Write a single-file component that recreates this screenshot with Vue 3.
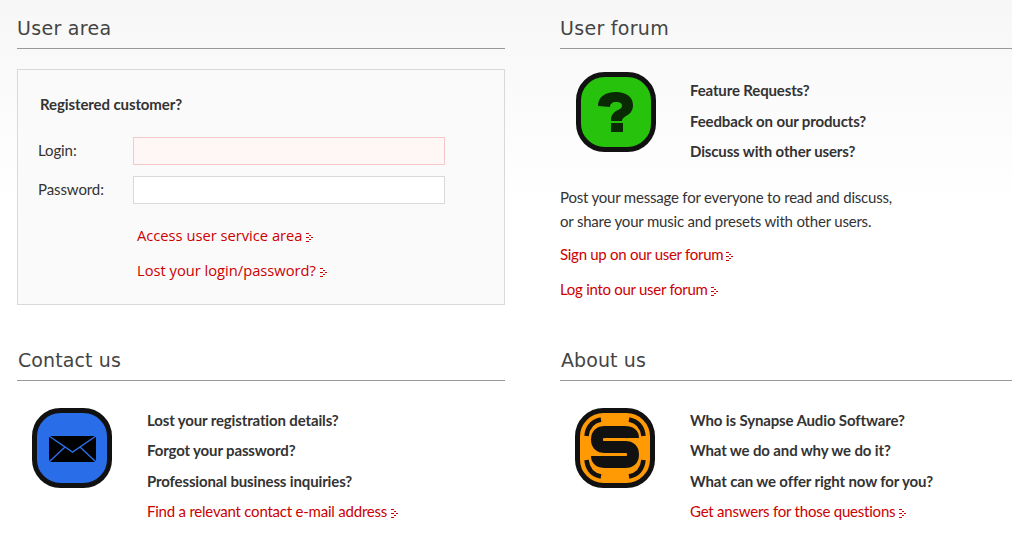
<template>
  <div class="page">
    <section class="panel">
      <h2 class="panel-title">User area</h2>
      <div class="login-box">
        <h3 class="login-title">Registered customer?</h3>
        <div class="field">
          <label class="field-label">Login:</label>
          <input class="field-input required" type="text" />
        </div>
        <div class="field">
          <label class="field-label">Password:</label>
          <input class="field-input" type="password" />
        </div>
        <div class="login-links">
          <a v-for="l in loginLinks" :key="l" class="link" href="#">{{ l }}<svg class="arrow" width="9" height="9" viewBox="0 0 9 9"><path :d="arrowPath" fill="#c00"/></svg></a>
        </div>
      </div>
    </section>

    <section class="panel">
      <h2 class="panel-title">User forum</h2>
      <div class="media forum-media">
        <svg class="media-icon" width="80" height="80" viewBox="0 0 80 80">
          <rect x="2.500" y="2.500" width="75" height="75" rx="26" fill="#27c20c" stroke="#111" stroke-width="5"/>
          <path d="M22 34c0-9 7-14 18-14 10 0 17 5 17 13 0 6-3 9-7 11-3 2-4 3-4 5H35c0-5 1-7 5-10 4-2 6-3 6-5 0-3-2-4-6-4-4 0-6 2-6 5z" fill="#0a2a04"/>
          <rect x="35" y="51" width="12" height="9" fill="#0a2a04"/>
        </svg>
        <ul class="questions">
          <li v-for="q in forumQuestions" :key="q">{{ q }}</li>
        </ul>
      </div>
      <p class="forum-text">Post your message for everyone to read and discuss,<br />or share your music and presets with other users.</p>
      <div class="forum-links">
        <a v-for="l in forumLinks" :key="l" class="link" href="#">{{ l }}<svg class="arrow" width="9" height="9" viewBox="0 0 9 9"><path :d="arrowPath" fill="#c00"/></svg></a>
      </div>
    </section>

    <section class="panel panel-low">
      <h2 class="panel-title">Contact us</h2>
      <div class="media contact-media">
        <svg class="media-icon" width="80" height="80" viewBox="0 0 80 80">
          <rect x="2.500" y="2.500" width="75" height="75" rx="26" fill="#2a6de8" stroke="#111" stroke-width="5"/>
          <rect x="17" y="28" width="47" height="26"/>
          <path d="M17 28l23.500 16L64 28M17 54l16-15M64 54L48 39" fill="none" stroke="#2a6de8" stroke-width="1.500"/>
        </svg>
        <div>
          <ul class="questions">
            <li v-for="q in contactQuestions" :key="q">{{ q }}</li>
          </ul>
          <a class="link" href="#">Find a relevant contact e-mail address<svg class="arrow" width="9" height="9" viewBox="0 0 9 9"><path :d="arrowPath" fill="#c00"/></svg></a>
        </div>
      </div>
    </section>

    <section class="panel panel-low">
      <h2 class="panel-title">About us</h2>
      <div class="media about-media">
        <svg class="media-icon" width="80" height="80" viewBox="0 0 80 80">
          <rect x="2.500" y="2.500" width="75" height="75" rx="26" fill="#ff9a05" stroke="#111" stroke-width="5"/>
          <path d="M11.500 28Q13 14 26 11.500M68.500 28Q67 14 54 11.500M11.500 52Q13 66 26 68.500M68.500 52Q67 66 54 68.500" fill="none" stroke="#111" stroke-width="4.500"/>
          <path d="M58 30Q58 24 50 24H30Q22 24 22 31.500T30 39H50Q58 39 58 46.500T50 54H30Q22 54 22 48" fill="none" stroke="#111" stroke-width="12"/>
        </svg>
        <div>
          <ul class="questions">
            <li v-for="q in aboutQuestions" :key="q">{{ q }}</li>
          </ul>
          <a class="link" href="#">Get answers for those questions<svg class="arrow" width="9" height="9" viewBox="0 0 9 9"><path :d="arrowPath" fill="#c00"/></svg></a>
        </div>
      </div>
    </section>
  </div>
</template>

<script setup>
const loginLinks = ['Access user service area', 'Lost your login/password?']
const forumLinks = ['Sign up on our user forum', 'Log into our user forum']
const forumQuestions = ['Feature Requests?', 'Feedback on our products?', 'Discuss with other users?']
const contactQuestions = ['Lost your registration details?', 'Forgot your password?', 'Professional business inquiries?']
const aboutQuestions = ['Who is Synapse Audio Software?', 'What we do and why we do it?', 'What can we offer right now for you?']

// small dotted chevron after every link
const arrowPath = 'M1 0h3v1H1zM4 2h2v1H4zM1 4h3v1H1zM6 4h2v1H6zM4 6h2v1H4zM1 8h3v1H1z'
</script>

<style scoped>
.page {
  width: 1012px;
  height: 550px;
  overflow: hidden;
  box-sizing: border-box;
  padding: 15px 0 0 17px;
  display: grid;
  grid-template-columns: 488px 452px;
  grid-template-rows: 300px auto;
  column-gap: 55px;
  align-content: start;
  font-family: Lato, sans-serif;
  font-size: 15px;
  color: #333;
  background: linear-gradient(#f7f7f7, #fff 210px);
}
.panel { min-width: 0; }
.panel-low { margin-top: 32px; }
.panel-title {
  margin: 0;
  height: 34px;
  box-sizing: border-box;
  border-bottom: 1px solid #999;
  font-family: "DejaVu Sans", sans-serif;
  font-size: 19px;
  font-weight: 400;
  line-height: 26px;
  letter-spacing: 0.3px;
  color: #444;
}
.panel-low .panel-title { padding-left: 1px; letter-spacing: 0.1px; }
.login-box {
  margin-top: 20px;
  height: 236px;
  box-sizing: border-box;
  border: 1px solid #d9d9d9;
  background: #fafafa;
  padding: 24px 0 0 20px;
}
.login-title {
  margin: 0 0 23px 2px;
  font-size: 15px;
  line-height: 20px;
  font-weight: 700;
  letter-spacing: -0.1px;
}
.field {
  display: flex;
  align-items: center;
  margin-bottom: 11px;
}
.field-label { width: 95px; font-size: 15px; letter-spacing: -0.1px; padding-bottom: 2px; }
.field-input {
  width: 312px;
  height: 28px;
  box-sizing: border-box;
  border: 1px solid #d9d9d9;
  background: #fff;
  outline: none;
  padding: 0;
}
.field-input.required { border-color: #f5c9c9; background: #fff6f6; }
.login-links {
  display: flex;
  flex-direction: column;
  align-items: flex-start;
  gap: 15px;
  margin: 21px 0 0 99px;
}
.link {
  display: block;
  color: #c00;
  text-decoration: none;
  font-size: 15px;
  line-height: 20px;
  letter-spacing: -0.22px;
}
.login-links .link {
  font-family: "Open Sans", sans-serif;
  font-size: 14.700px;
  letter-spacing: 0;
}
.arrow { margin-left: 3px; vertical-align: -1px; shape-rendering: crispEdges; }
.media { display: flex; }
.forum-media { margin: 23px 0 0 16px; }
.contact-media { margin: 27px 0 0 15px; }
.about-media { margin: 27px 0 0 15px; }
.media-icon { flex: none; margin-right: 34px; }
.contact-media .media-icon, .about-media .media-icon { margin-right: 35px; }
.questions { list-style: none; margin: 0; padding: 0; font-weight: 700; letter-spacing: -0.14px; }
.questions li { line-height: 20px; margin-bottom: 10.500px; }
.forum-media .questions { margin-top: 8px; }
.contact-media .questions, .about-media .questions { margin-top: 1.900px; }
.media .link { margin-top: 1px; }
.forum-text { margin: 13px 0 0; line-height: 24px; letter-spacing: -0.2px; }
.forum-links { margin-top: 11px; display: flex; flex-direction: column; gap: 15px; }
.forum-links .link { letter-spacing: -0.28px; }
.forum-links .arrow { margin-left: 2px; }
</style>

<style>
html, body { background: #fff; }
</style>
